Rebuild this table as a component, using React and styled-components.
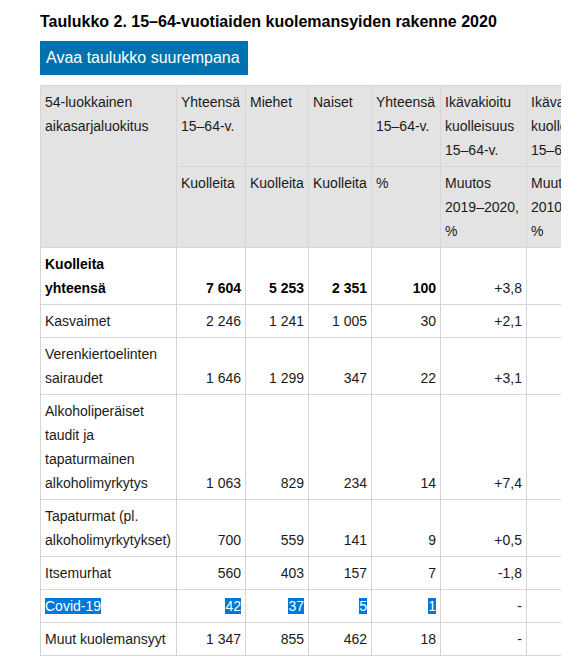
import React from "react";
import styled, { createGlobalStyle } from "styled-components";

const GlobalStyle = createGlobalStyle`
  html, body {
    margin: 0;
    padding: 0;
    background: #fff;
  }
  body {
    font-family: "Liberation Sans", Arial, sans-serif;
    color: #111;
  }
`;

const Page = styled.div`
  padding: 12px 0 0 40px;
`;

const Title = styled.h3`
  margin: 0 0 10px;
  font-size: 16px;
  font-weight: bold;
  line-height: 19px;
  color: #000;
`;

const OpenButton = styled.button`
  display: block;
  height: 34px;
  margin: 0 0 10px;
  padding: 0 8px 0 6px;
  border: 0;
  background: #0072ae;
  color: #fff;
  font-family: "Liberation Sans", Arial, sans-serif;
  font-size: 16px;
  cursor: pointer;
`;

const Scroller = styled.div`
  width: 521px;
  overflow: hidden;
`;

const Table = styled.table`
  table-layout: fixed;
  width: 573px;
  border-collapse: collapse;
  font-size: 14px;
  line-height: 24px;
`;

const Head = styled.th`
  background: #e3e3e3;
  border: 1px solid #d6d6d6;
  padding: 4px 4px;
  font-weight: normal;
  text-align: left;
  vertical-align: top;
  color: #1a1a1a;
  white-space: ${props => (props.nowrap ? "nowrap" : "normal")};
`;

const Label = styled.td`
  border: 1px solid #d6d6d6;
  padding: 4px 4px;
  vertical-align: top;
  font-weight: ${props => (props.bold ? "bold" : "normal")};
  color: ${props => (props.bold ? "#000" : "#1a1a1a")};
`;

const Value = styled.td`
  border: 1px solid #d6d6d6;
  padding: 4px 4px;
  text-align: right;
  vertical-align: bottom;
  white-space: nowrap;
  font-weight: ${props => (props.bold ? "bold" : "normal")};
  color: ${props => (props.bold ? "#000" : "#1a1a1a")};
`;

const Selected = styled.span`
  background: ${props => (props.on ? "#0078d7" : "transparent")};
  color: ${props => (props.on ? "#fff" : "inherit")};
`;

const widths = [136, 69, 63, 63, 69, 86, 87];

const rows = [
  { name: ["Kuolleita", "yhteensä"], values: ["7 604", "5 253", "2 351", "100", "+3,8", "+11,2"], bold: true },
  { name: ["Kasvaimet"], values: ["2 246", "1 241", "1 005", "30", "+2,1", "-20,4"] },
  { name: ["Verenkiertoelinten sairaudet"], values: ["1 646", "1 299", "347", "22", "+3,1", "-27,9"] },
  {
    name: ["Alkoholiperäiset taudit ja tapaturmainen alkoholimyrkytys"],
    values: ["1 063", "829", "234", "14", "+7,4", "-30,5"]
  },
  { name: ["Tapaturmat (pl. alkoholimyrkytykset)"], values: ["700", "559", "141", "9", "+0,5", "-30,1"] },
  { name: ["Itsemurhat"], values: ["560", "403", "157", "7", "-1,8", "-30,3"] },
  { name: ["Covid-19"], values: ["42", "37", "5", "1", "-", "-"], selected: true },
  { name: ["Muut kuolemansyyt"], values: ["1 347", "855", "462", "18", "-", "-"] }
];

const App = () => (
  <Page>
    <GlobalStyle />
    <Title>Taulukko 2. 15–64-vuotiaiden kuolemansyiden rakenne 2020</Title>
    <OpenButton type="button">Avaa taulukko suurempana</OpenButton>
    <Scroller>
      <Table>
        <colgroup>
          {widths.map((w, i) => (
            <col key={i} style={{ width: w }} />
          ))}
        </colgroup>
        <thead>
          <tr>
            <Head rowSpan={2}>54-luokkainen aikasarjaluokitus</Head>
            <Head>Yhteensä 15–64-v.</Head>
            <Head>Miehet</Head>
            <Head>Naiset</Head>
            <Head>Yhteensä 15–64-v.</Head>
            <Head>Ikävakioitu kuolleisuus 15–64-v.</Head>
            <Head>Ikävakioitu kuolleisuus 15–64-v.</Head>
          </tr>
          <tr>
            <Head nowrap>Kuolleita</Head>
            <Head nowrap>Kuolleita</Head>
            <Head nowrap>Kuolleita</Head>
            <Head>%</Head>
            <Head>Muutos 2019–2020, %</Head>
            <Head>Muutos 2010–2020, %</Head>
          </tr>
        </thead>
        <tbody>
          {rows.map(row => (
            <tr key={row.name.join(" ")}>
              <Label bold={row.bold}>
                {row.name.map((part, i) => (
                  <React.Fragment key={i}>
                    {i > 0 && <br />}
                    <Selected on={row.selected}>{part}</Selected>
                  </React.Fragment>
                ))}
              </Label>
              {row.values.map((v, i) => (
                <Value key={i} bold={row.bold && i < 4}>
                  <Selected on={row.selected && i < 4}>{v}</Selected>
                </Value>
              ))}
            </tr>
          ))}
        </tbody>
      </Table>
    </Scroller>
  </Page>
);

export default App;
